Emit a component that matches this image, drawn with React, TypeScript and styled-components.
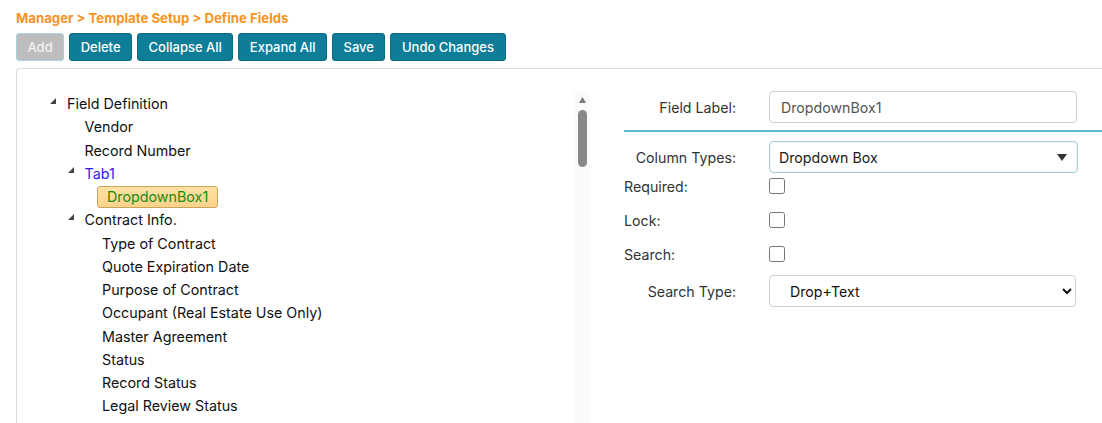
import React from 'react';
import styled, { createGlobalStyle } from 'styled-components';

const GlobalStyle = createGlobalStyle`
  html, body {
    margin: 0;
    padding: 0;
    background: #ffffff;
    overflow: hidden;
  }
  body {
    font-family: Inter, "Noto Sans", Arial, sans-serif;
    color: #111;
  }
`;

const Page = styled.div`
  padding: 10px 0 0 16px;
  height: 413px;
  display: flex;
  flex-direction: column;
`;

const Breadcrumb = styled.div`
  font-size: 13.2px;
  font-weight: 700;
  color: #f7941e;
  line-height: 17px;
  height: 17px;
  margin-bottom: 6px;
`;

const Toolbar = styled.div`
  display: flex;
  gap: 5px;
  margin-bottom: 7px;
`;

const ToolButton = styled.button<{ $disabled?: boolean }>`
  height: 28px;
  padding: 0 10.5px;
  font-family: inherit;
  font-size: 13px;
  font-weight: 500;
  border-radius: 3px;
  border: 1px solid ${p => (p.$disabled ? '#a8d2e2' : '#0b6b82')};
  background: ${p => (p.$disabled ? '#bdbdbd' : '#0e7d97')};
  color: ${p => (p.$disabled ? '#f2f2f2' : '#ffffff')};
  cursor: ${p => (p.$disabled ? 'default' : 'pointer')};
`;

const Panel = styled.div`
  flex: 1;
  display: flex;
  border-top: 1px solid #dcdcdc;
  border-left: 1px solid #dcdcdc;
  border-top-left-radius: 4px;
  min-height: 0;
`;

const TreePane = styled.div`
  width: 573px;
  display: flex;
  padding-top: 23px;
`;

const TreeList = styled.div`
  flex: 1;
  overflow: hidden;
`;

const Row = styled.div<{ $level: number }>`
  height: 23.25px;
  display: flex;
  align-items: center;
  padding-left: ${p => 33 + p.$level * 17.5}px;
  font-size: 14.3px;
  white-space: nowrap;
`;

const Toggle = styled.span`
  width: 17px;
  flex: none;
  display: flex;
  transform: translateY(-3px);
`;

const Label = styled.span<{ $tone?: 'link' }>`
  color: ${p => (p.$tone === 'link' ? '#2a1cf0' : '#111')};
`;

const Selected = styled.span`
  margin-left: -5px;
  padding: 0 9px;
  height: 20px;
  line-height: 20px;
  border: 1px solid #c9a55c;
  border-radius: 3px;
  background: linear-gradient(#ffe2a3, #fdd28a);
  color: #178a17;
`;

const ScrollTrack = styled.div`
  width: 16px;
  flex: none;
  background: #fafafa;
  display: flex;
  flex-direction: column;
  align-items: center;
  padding-top: 5px;
`;

const ScrollThumb = styled.div`
  width: 9px;
  height: 57px;
  margin-top: 7px;
  border-radius: 5px;
  background: #888;
`;

const FormPane = styled.div`
  flex: 1;
  padding: 22px 0 0 34px;
  color: #333;
  font-size: 14.2px;
`;

const FormRow = styled.div<{ $height: number }>`
  display: grid;
  grid-template-columns: 112px 308px;
  column-gap: 33px;
  align-items: center;
  height: ${p => p.$height}px;
`;

const FieldLabel = styled.label<{ $align?: 'left' }>`
  text-align: ${p => (p.$align === 'left' ? 'left' : 'right')};
  white-space: nowrap;
`;

const TextInput = styled.input`
  box-sizing: border-box;
  height: 32px;
  width: 308px;
  padding: 0 11px;
  font-family: inherit;
  font-size: 14.2px;
  color: #555;
  border: 1px solid #cfcfcf;
  border-radius: 4px;
  outline: none;
`;

const Divider = styled.div`
  height: 2px;
  background: #5ab9d7;
  margin: 7px 0 9px;
`;

const ComboBox = styled.div`
  box-sizing: border-box;
  height: 32px;
  width: 309px;
  padding: 0 10px 0 9px;
  display: flex;
  align-items: center;
  justify-content: space-between;
  color: #1a1a1a;
  border: 1px solid #a9cbd8;
  border-radius: 4px;
  box-shadow: inset 0 0 2px rgba(120, 170, 200, 0.35);
`;

const CheckGroup = styled.div`
  margin-top: -4px;
`;

const CheckBox = styled.input`
  width: 16px;
  height: 16px;
  margin: 0;
`;

const NativeSelect = styled.select`
  box-sizing: border-box;
  height: 32px;
  width: 307px;
  padding: 0 12px 0 16px;
  font-family: inherit;
  font-size: 14.2px;
  color: #111;
  background: #fff;
  border: 1px solid #cfcfcf;
  border-radius: 4px;
`;

const Triangle = () => (
  <svg width="6" height="6" viewBox="0 0 6 6">
    <polygon points="6,0 6,6 0,6" fill="#444" />
  </svg>
);

type Node = { label: string; level: number; open?: boolean; tone?: 'link'; selected?: boolean };

const nodes: Node[] = [
  { label: 'Field Definition', level: 0, open: true },
  { label: 'Vendor', level: 1 },
  { label: 'Record Number', level: 1 },
  { label: 'Tab1', level: 1, open: true, tone: 'link' },
  { label: 'DropdownBox1', level: 2, selected: true },
  { label: 'Contract Info.', level: 1, open: true },
  { label: 'Type of Contract', level: 2 },
  { label: 'Quote Expiration Date', level: 2 },
  { label: 'Purpose of Contract', level: 2 },
  { label: 'Occupant (Real Estate Use Only)', level: 2 },
  { label: 'Master Agreement', level: 2 },
  { label: 'Status', level: 2 },
  { label: 'Record Status', level: 2 },
  { label: 'Legal Review Status', level: 2 },
  { label: 'Scope Reference', level: 2 },
];

export default function App() {
  return (
    <>
      <GlobalStyle />
      <Page>
        <Breadcrumb>Manager &gt; Template Setup &gt; Define Fields</Breadcrumb>
        <Toolbar>
          <ToolButton $disabled>Add</ToolButton>
          <ToolButton>Delete</ToolButton>
          <ToolButton>Collapse All</ToolButton>
          <ToolButton>Expand All</ToolButton>
          <ToolButton>Save</ToolButton>
          <ToolButton>Undo Changes</ToolButton>
        </Toolbar>
        <Panel>
          <TreePane>
            <TreeList>
              {nodes.map((n, i) => (
                <Row key={i} $level={n.level}>
                  {n.open ? (
                    <Toggle>
                      <Triangle />
                    </Toggle>
                  ) : (
                    <Toggle />
                  )}
                  {n.selected ? (
                    <Selected>{n.label}</Selected>
                  ) : (
                    <Label $tone={n.tone}>{n.label}</Label>
                  )}
                </Row>
              ))}
            </TreeList>
            <ScrollTrack>
              <svg width="7" height="6" viewBox="0 0 7 6">
                <polygon points="3.5,0 7,6 0,6" fill="#7a7a7a" />
              </svg>
              <ScrollThumb />
            </ScrollTrack>
          </TreePane>
          <FormPane>
            <FormRow $height={32}>
              <FieldLabel>Field Label:</FieldLabel>
              <TextInput defaultValue="DropdownBox1" />
            </FormRow>
            <Divider />
            <FormRow $height={32}>
              <FieldLabel>Column Types:</FieldLabel>
              <ComboBox>
                <span>Dropdown Box</span>
                <svg width="10" height="7" viewBox="0 0 10 7">
                  <polygon points="0,0 10,0 5,7" fill="#333" />
                </svg>
              </ComboBox>
            </FormRow>
            <CheckGroup>
              <FormRow $height={34}>
                <FieldLabel $align="left">Required:</FieldLabel>
                <CheckBox type="checkbox" />
              </FormRow>
              <FormRow $height={34}>
                <FieldLabel $align="left">Lock:</FieldLabel>
                <CheckBox type="checkbox" />
              </FormRow>
              <FormRow $height={34}>
                <FieldLabel $align="left">Search:</FieldLabel>
                <CheckBox type="checkbox" />
              </FormRow>
            </CheckGroup>
            <FormRow $height={32} style={{ marginTop: 4 }}>
              <FieldLabel>Search Type:</FieldLabel>
              <NativeSelect defaultValue="Drop+Text">
                <option>Drop+Text</option>
                <option>Dropdown</option>
                <option>Text</option>
              </NativeSelect>
            </FormRow>
          </FormPane>
        </Panel>
      </Page>
    </>
  );
}
